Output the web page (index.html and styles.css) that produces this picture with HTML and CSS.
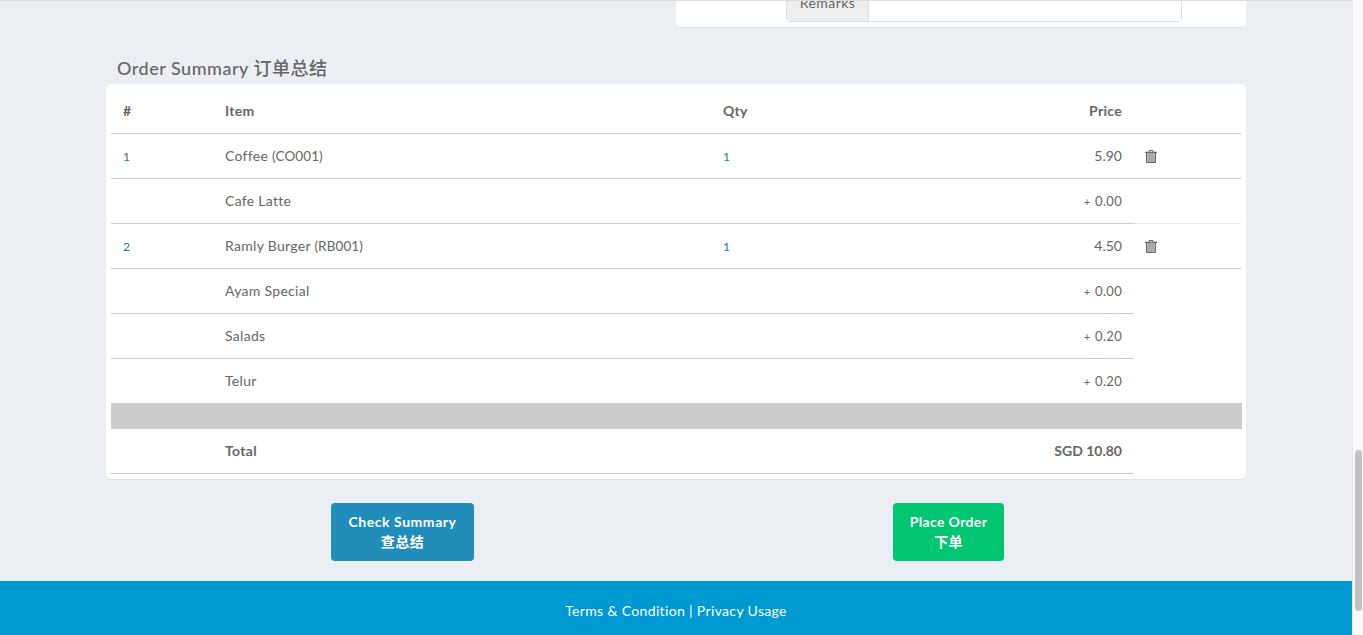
FILE: index.html
```html
<!DOCTYPE html>
<html lang="en">
<head>
    <meta charset="UTF-8">
    <title>Order Summary</title>
    <link rel="stylesheet" href="styles.css">
</head>
<body>
    <div class="page">
        <div class="content">
            <div class="top-row">
                <div></div>
                <div class="panel">
                    <div class="input-group">
                        <span class="addon">Remarks</span>
                        <span class="input"></span>
                    </div>
                </div>
            </div>

            <h3 class="heading">Order Summary 订单总结</h3>

            <div class="card">
                <table class="summary">
                    <colgroup>
                        <col class="col-no">
                        <col class="col-item">
                        <col class="col-qty">
                        <col class="col-price">
                        <col class="col-del">
                    </colgroup>
                    <thead>
                        <tr>
                            <th>#</th>
                            <th>Item</th>
                            <th>Qty</th>
                            <th class="right">Price</th>
                            <th></th>
                        </tr>
                    </thead>
                    <tbody>
                        <tr>
                            <td class="link">1</td>
                            <td>Coffee <span class="code">(CO001)</span></td>
                            <td class="link">1</td>
                            <td class="right num">5.90</td>
                            <td class="del">
                                <svg class="trash" viewBox="0 0 12 13"><path d="M4.2 0h3.6l.8 1.7H12v1.2h-1V12a1 1 0 0 1-1 1H2a1 1 0 0 1-1-1V2.9H0V1.700h3.400zM4.800 1 4.500 1.700h3L7.200 1zM2.300 2.900v8.900h7.400V2.900z"/><path class="trash-fill" d="M2.300 2.900h7.400v8.900H2.300z"/></svg>
                            </td>
                        </tr>
                        <tr>
                            <td></td>
                            <td>Cafe Latte</td>
                            <td></td>
                            <td class="right small"><span class="plus">+</span> 0.00</td>
                            <td class="light"></td>
                        </tr>
                        <tr>
                            <td class="link">2</td>
                            <td>Ramly Burger <span class="code">(RB001)</span></td>
                            <td class="link">1</td>
                            <td class="right num">4.50</td>
                            <td class="del">
                                <svg class="trash" viewBox="0 0 12 13"><path d="M4.2 0h3.6l.8 1.7H12v1.2h-1V12a1 1 0 0 1-1 1H2a1 1 0 0 1-1-1V2.9H0V1.700h3.400zM4.800 1 4.500 1.700h3L7.200 1zM2.300 2.900v8.900h7.400V2.900z"/><path class="trash-fill" d="M2.300 2.900h7.400v8.900H2.300z"/></svg>
                            </td>
                        </tr>
                        <tr>
                            <td></td>
                            <td>Ayam Special</td>
                            <td></td>
                            <td class="right small"><span class="plus">+</span> 0.00</td>
                            <td class="blank" rowspan="3"></td>
                        </tr>
                        <tr>
                            <td></td>
                            <td>Salads</td>
                            <td></td>
                            <td class="right small"><span class="plus">+</span> 0.20</td>
                        </tr>
                        <tr class="last-addon">
                            <td></td>
                            <td>Telur</td>
                            <td></td>
                            <td class="right small"><span class="plus">+</span> 0.20</td>
                        </tr>
                        <tr class="band">
                            <td colspan="5"></td>
                        </tr>
                        <tr class="total">
                            <td></td>
                            <td>Total</td>
                            <td></td>
                            <td class="right num">SGD 10.80</td>
                            <td class="blank"></td>
                        </tr>
                    </tbody>
                </table>
            </div>

            <div class="actions">
                <div class="action"><a class="btn btn-blue">Check Summary<br>查总结</a></div>
                <div class="action"><a class="btn btn-green">Place Order<br>下单</a></div>
            </div>
        </div>

        <footer class="footer">Terms &amp; Condition | Privacy Usage</footer>
    </div>

    <div class="scrollbar"><div class="thumb"></div></div>
</body>
</html>
```

FILE: styles.css
```css
html, body {
    height: 100%;
}

body {
    margin: 0;
    height: 635px;
    overflow: hidden;
    display: flex;
    font-family: Lato, "Noto Sans CJK SC", sans-serif;
    font-size: 14px;
    color: #666;
    background-color: #ebeef3;
}

.page {
    flex: 1;
    display: flex;
    flex-direction: column;
    height: 635px;
    border-top: 1px solid #d9dce0;
    box-sizing: border-box;
}

.content {
    width: 1140px;
    margin: 0 auto;
    flex: 1;
}

.top-row {
    display: grid;
    grid-template-columns: 570px 570px;
}

.panel {
    height: 26px;
    overflow: hidden;
    background-color: #fff;
    border-radius: 0 0 4px 4px;
    box-shadow: 0 1px 1px rgba(0, 0, 0, 0.05);
    padding: 0 64px 0 110px;
}

.input-group {
    display: flex;
    height: 34px;
    margin-top: -13px;
    border: 1px solid #ddd;
    border-radius: 4px;
    box-sizing: border-box;
}

.addon {
    width: 82px;
    box-sizing: border-box;
    text-align: center;
    line-height: 28px;
    letter-spacing: 0.45px;
    background-color: #eee;
    border-right: 1px solid #ddd;
    border-radius: 3px 0 0 3px;
}

.input {
    flex: 1;
    background-color: #fff;
}

.heading {
    margin: 28px 0 2px 11px;
    height: 27px;
    line-height: 27px;
    font-size: 18px;
    font-weight: 500;
    letter-spacing: 0.5px;
}

.card {
    height: 395px;
    box-sizing: border-box;
    padding: 5px;
    background-color: #fff;
    border-radius: 5px;
    box-shadow: 0 1px 1px rgba(0, 0, 0, 0.05);
}

.summary {
    width: 1130px;
    border-collapse: separate;
    border-spacing: 0;
    table-layout: fixed;
}

.col-no { width: 102px; }
.col-item { width: 498px; }
.col-qty { width: 211px; }
.col-price { width: 212px; }
.col-del { width: 107px; }

.summary th,
.summary td {
    height: 42px;
    padding: 0 12px 2px;
    box-sizing: content-box;
    text-align: left;
    letter-spacing: 0.3px;
    border-bottom: 1px solid #ccc;
}

.summary th {
    font-weight: 700;
}

.summary .right {
    text-align: right;
}

.summary .num {
    letter-spacing: 0;
}

.summary .code {
    font-size: 13.5px;
    letter-spacing: 0.1px;
}

.summary .link {
    color: #22789f;
    font-size: 12px;
    padding-bottom: 0;
    height: 44px;
}

.summary .small {
    font-size: 13px;
    letter-spacing: 0.3px;
    padding-bottom: 0;
    height: 44px;
}

.summary .light {
    border-bottom-color: #e4e4e4;
}

.summary .blank {
    border-bottom: none;
}

.plus {
    font-size: 11px;
    margin-right: 1px;
}

.summary .last-addon td {
    border-bottom: none;
}

.summary .band td {
    height: 26px;
    padding: 0;
    border: none;
    background-color: #ccc;
    box-shadow: 1px 0 0 #ccc;
}

.summary .total td {
    font-weight: 700;
}

.summary .del {
    padding: 0 11px 0;
    height: 44px;
}

.trash {
    display: block;
    width: 12px;
    height: 13px;
    fill: #666;
}

.trash-fill {
    fill: #aaa;
}

.actions {
    display: grid;
    grid-template-columns: 546px 546px;
    margin: 24px 0 0 24px;
}

.action {
    text-align: center;
    margin-left: -1px;
}

.btn {
    display: inline-block;
    padding: 9px 17px;
    font-weight: 700;
    line-height: 20px;
    letter-spacing: 0.35px;
    color: #fff;
    border-radius: 4px;
}

.btn-blue {
    background-color: #218dbb;
    letter-spacing: 0.55px;
}

.btn-green {
    background-color: #00c571;
}

.footer {
    height: 54px;
    line-height: 60px;
    text-align: center;
    color: #fff;
    font-size: 14px;
    letter-spacing: 0.35px;
    background-color: #009ad3;
}

.scrollbar {
    width: 11px;
    height: 635px;
    box-sizing: border-box;
    background-color: #fafafa;
    border-left: 1px solid #e8e8e8;
    padding-top: 450px;
}

.thumb {
    width: 7px;
    height: 161px;
    margin-left: 2px;
    border-radius: 4px;
    background-color: #c2c2c2;
}
```
